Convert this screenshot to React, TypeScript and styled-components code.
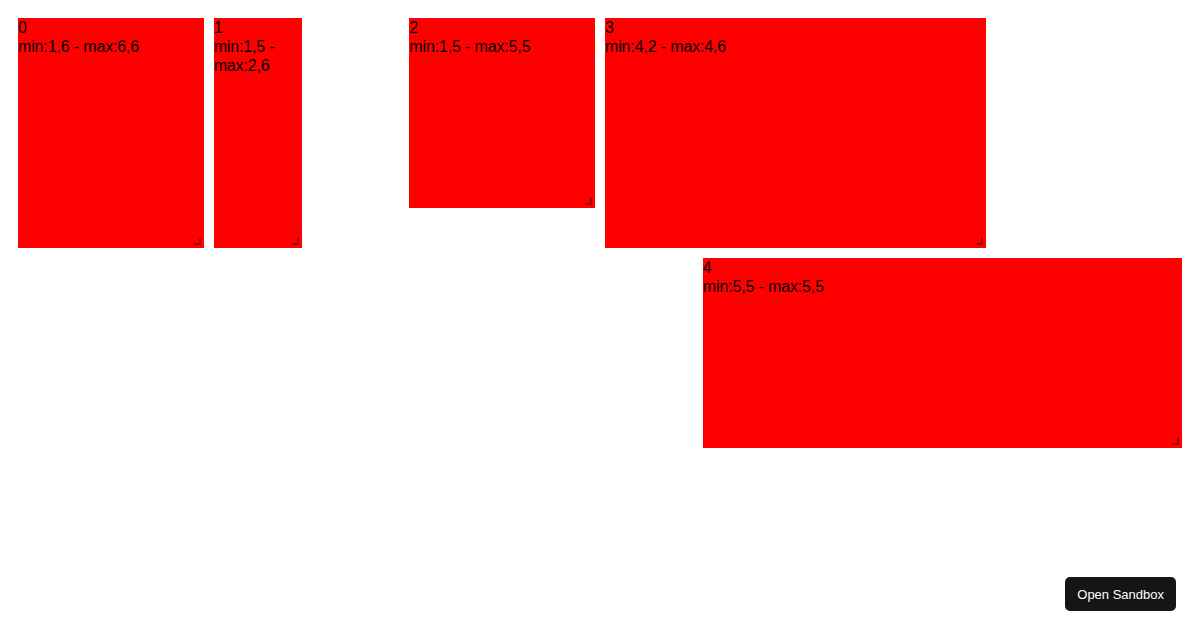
import React from "react";
import styled, { createGlobalStyle } from "styled-components";

const GlobalStyle = createGlobalStyle`
  body {
    margin: 8px;
    background: #ffffff;
    font-family: "Liberation Sans", Arial, sans-serif;
  }
`;

type Item = {
  i: string;
  x: number;
  y: number;
  w: number;
  h: number;
  min: string;
  max: string;
};

const layout: Item[] = [
  { i: "0", x: 0, y: 0, w: 2, h: 6, min: "1,6", max: "6,6" },
  { i: "1", x: 2, y: 0, w: 1, h: 6, min: "1,5", max: "2,6" },
  { i: "2", x: 4, y: 0, w: 2, h: 5, min: "1,5", max: "5,5" },
  { i: "3", x: 6, y: 0, w: 4, h: 6, min: "4,2", max: "4,6" },
  { i: "4", x: 7, y: 6, w: 5, h: 5, min: "5,5", max: "5,5" },
];

export default function App(): React.JSX.Element {
  return (
    <>
      <GlobalStyle />
      <GridLayout>
        {layout.map((item) => (
          <GridItem key={item.i} $x={item.x} $y={item.y} $w={item.w} $h={item.h}>
            <ItemText>{item.i}</ItemText>
            <ItemText>
              min:{item.min} - max:{item.max}
            </ItemText>
            <ResizeHandle />
          </GridItem>
        ))}
      </GridLayout>
      <SandboxButton>Open Sandbox</SandboxButton>
    </>
  );
}

const GridLayout = styled.div`
  display: grid;
  grid-template-columns: repeat(12, 1fr);
  grid-auto-rows: 30px;
  gap: 10px;
  padding: 10px;
`;

type GridItemProps = { $x: number; $y: number; $w: number; $h: number };

const GridItem = styled.div<GridItemProps>`
  position: relative;
  grid-column: ${(p) => p.$x + 1} / span ${(p) => p.$w};
  grid-row: ${(p) => p.$y + 1} / span ${(p) => p.$h};
  background: #ff0000;
  color: #000000;
  font-size: 16px;
  line-height: 19px;
  letter-spacing: -0.15px;
  overflow: hidden;
`;

const ItemText = styled.div`
  display: block;
`;

const ResizeHandle = styled.span`
  position: absolute;
  right: 3px;
  bottom: 3px;
  width: 5px;
  height: 5px;
  border-right: 2px solid rgba(0, 0, 0, 0.4);
  border-bottom: 2px solid rgba(0, 0, 0, 0.4);
`;

const SandboxButton = styled.button`
  position: fixed;
  right: 24px;
  bottom: 19px;
  height: 34px;
  padding: 0 12px;
  border: none;
  border-radius: 5px;
  background: #151515;
  color: #ffffff;
  font-family: "Liberation Sans", Arial, sans-serif;
  font-size: 13px;
  cursor: pointer;
`;
